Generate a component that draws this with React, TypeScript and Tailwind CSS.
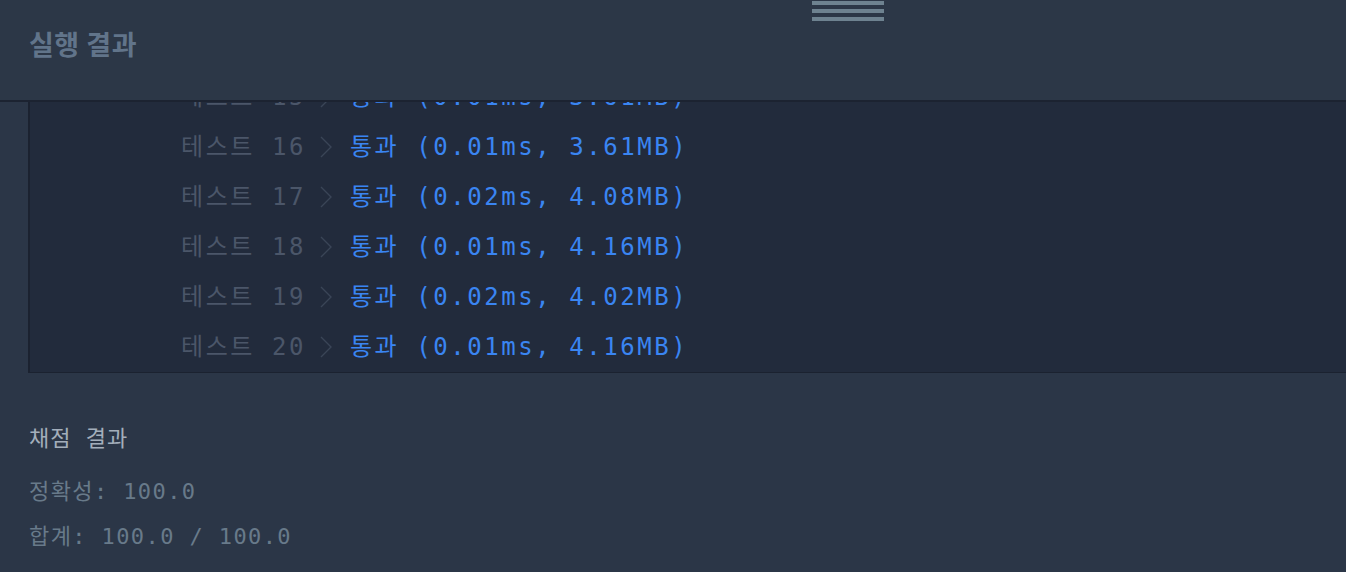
import React from "react";

const rows = [
  { n: 15, t: "0.01ms", m: "3.61MB" },
  { n: 16, t: "0.01ms", m: "3.61MB" },
  { n: 17, t: "0.02ms", m: "4.08MB" },
  { n: 18, t: "0.01ms", m: "4.16MB" },
  { n: 19, t: "0.02ms", m: "4.02MB" },
  { n: 20, t: "0.01ms", m: "4.16MB" },
];

const mono = "font-['DejaVu_Sans_Mono','Noto_Sans_CJK_KR',monospace]";

function Chevron() {
  return (
    <svg width="14" height="24" viewBox="0 0 14 24" className="ml-[13px] mr-[17px] shrink-0" fill="none">
      <path d="M2 2 L12 12 L2 22" stroke="#3a4557" strokeWidth="1.4" />
    </svg>
  );
}

export default function App() {
  return (
    <div className="w-[1346px] h-[572px] bg-[#2b3647] flex flex-col overflow-hidden">
      <header className="relative z-10 h-[102px] shrink-0 bg-[#2c3747] border-b-2 border-[#1c2331] flex items-center pl-[29px]">
        <div className="absolute left-[812px] top-[1px] flex flex-col gap-[4px]">
          <div className="w-[72px] h-[4px] bg-[#6e8290]" />
          <div className="w-[72px] h-[4px] bg-[#6e8290]" />
          <div className="w-[72px] h-[4px] bg-[#6e8290]" />
        </div>
        <h1 className="font-['Noto_Sans_CJK_KR',sans-serif] font-bold text-[27px] tracking-[0.5px] leading-none text-[#61748a] -mt-[13px]">
          실행 결과
        </h1>
      </header>
      <div className="flex-1 flex flex-col overflow-hidden">
        <div className="h-[271px] shrink-0 overflow-hidden">
          <div className="ml-[28px] -mt-[30px] bg-[#222b3c] border-l-2 border-b-2 border-[#1b2230] pl-[151px]">
            {rows.map((r) => (
              <div key={r.n} className={`h-[50px] flex items-center ${mono} text-[24px] tracking-[2.55px] whitespace-pre`}>
                <span className="text-[#4b5669]">{`테스트 ${r.n}`}</span>
                <Chevron />
                <span className="text-[#3a85f2]">{`통과 (${r.t}, ${r.m})`}</span>
              </div>
            ))}
          </div>
        </div>
        <div className={`pl-[29px] pt-[52px] ${mono}`}>
          <div className="text-[22px] leading-[28px] tracking-[1px] text-[#a3aebb] whitespace-pre">채점 결과</div>
          <div className="mt-[29px] text-[22px] leading-[20px] tracking-[1.4px] text-[#687a8a] whitespace-pre">정확성: 100.0</div>
          <div className="mt-[25px] text-[22px] leading-[20px] tracking-[1.4px] text-[#687a8a] whitespace-pre">합계: 100.0 / 100.0</div>
        </div>
      </div>
    </div>
  );
}
